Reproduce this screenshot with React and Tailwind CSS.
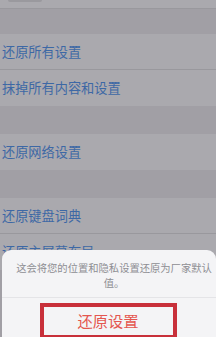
import React from "react";

const Row = ({ label, last }) => (
  <div
    className={`h-[36px] flex items-center pl-[2px] bg-[#aaa9ae] ${
      last ? "" : "border-b border-[#99989d]"
    }`}
  >
    <span className="text-[13.2px] leading-none text-[#3d68a5]">{label}</span>
  </div>
);

const Gap = ({ h }) => <div className={`${h} bg-[#a19fa5]`} />;

const App = () => {
  return (
    <div
      className="relative w-[216px] h-[337px] overflow-hidden bg-[#a19fa5]"
      style={{ fontFamily: '"Noto Sans CJK SC", "Noto Sans", sans-serif' }}
    >
      {/* top cell remnant */}
      <div className="h-[9px] bg-[#aaa9ae] border-b border-[#99989d] relative">
        <div className="absolute left-[8px] top-0 w-[34px] h-[2px] bg-[#9a999e] rounded-b" />
      </div>
      <Gap h="h-[25px]" />
      <Row label="还原所有设置" />
      <Row label="抹掉所有内容和设置" last />
      <Gap h="h-[28px]" />
      <Row label="还原网络设置" last />
      <Gap h="h-[28px]" />
      <Row label="还原键盘词典" />
      <Row label="还原主屏幕布局" last />

      {/* action sheet */}
      <div className="absolute left-[2px] right-0 top-[250px] bottom-0 bg-[#f4f4f6] rounded-t-[9px]">
        <div className="pt-[10px] pl-[12px] pr-[2px] h-[48px] border-b border-[#e4e4e7]">
          <p className="text-[10.3px] leading-[15px] text-[#8e8e93] text-center">
            这会将您的位置和隐私设置还原为厂家默认值。
          </p>
        </div>
        <div className="flex justify-center pt-[5px]">
          <div className="w-[137px] h-[36px] border-[4px] border-[#c8303a] flex items-center justify-center ml-[-2px]">
            <span className="text-[15.3px] leading-none text-[#e4564f]">
              还原设置
            </span>
          </div>
        </div>
      </div>
    </div>
  );
};

export default App;
